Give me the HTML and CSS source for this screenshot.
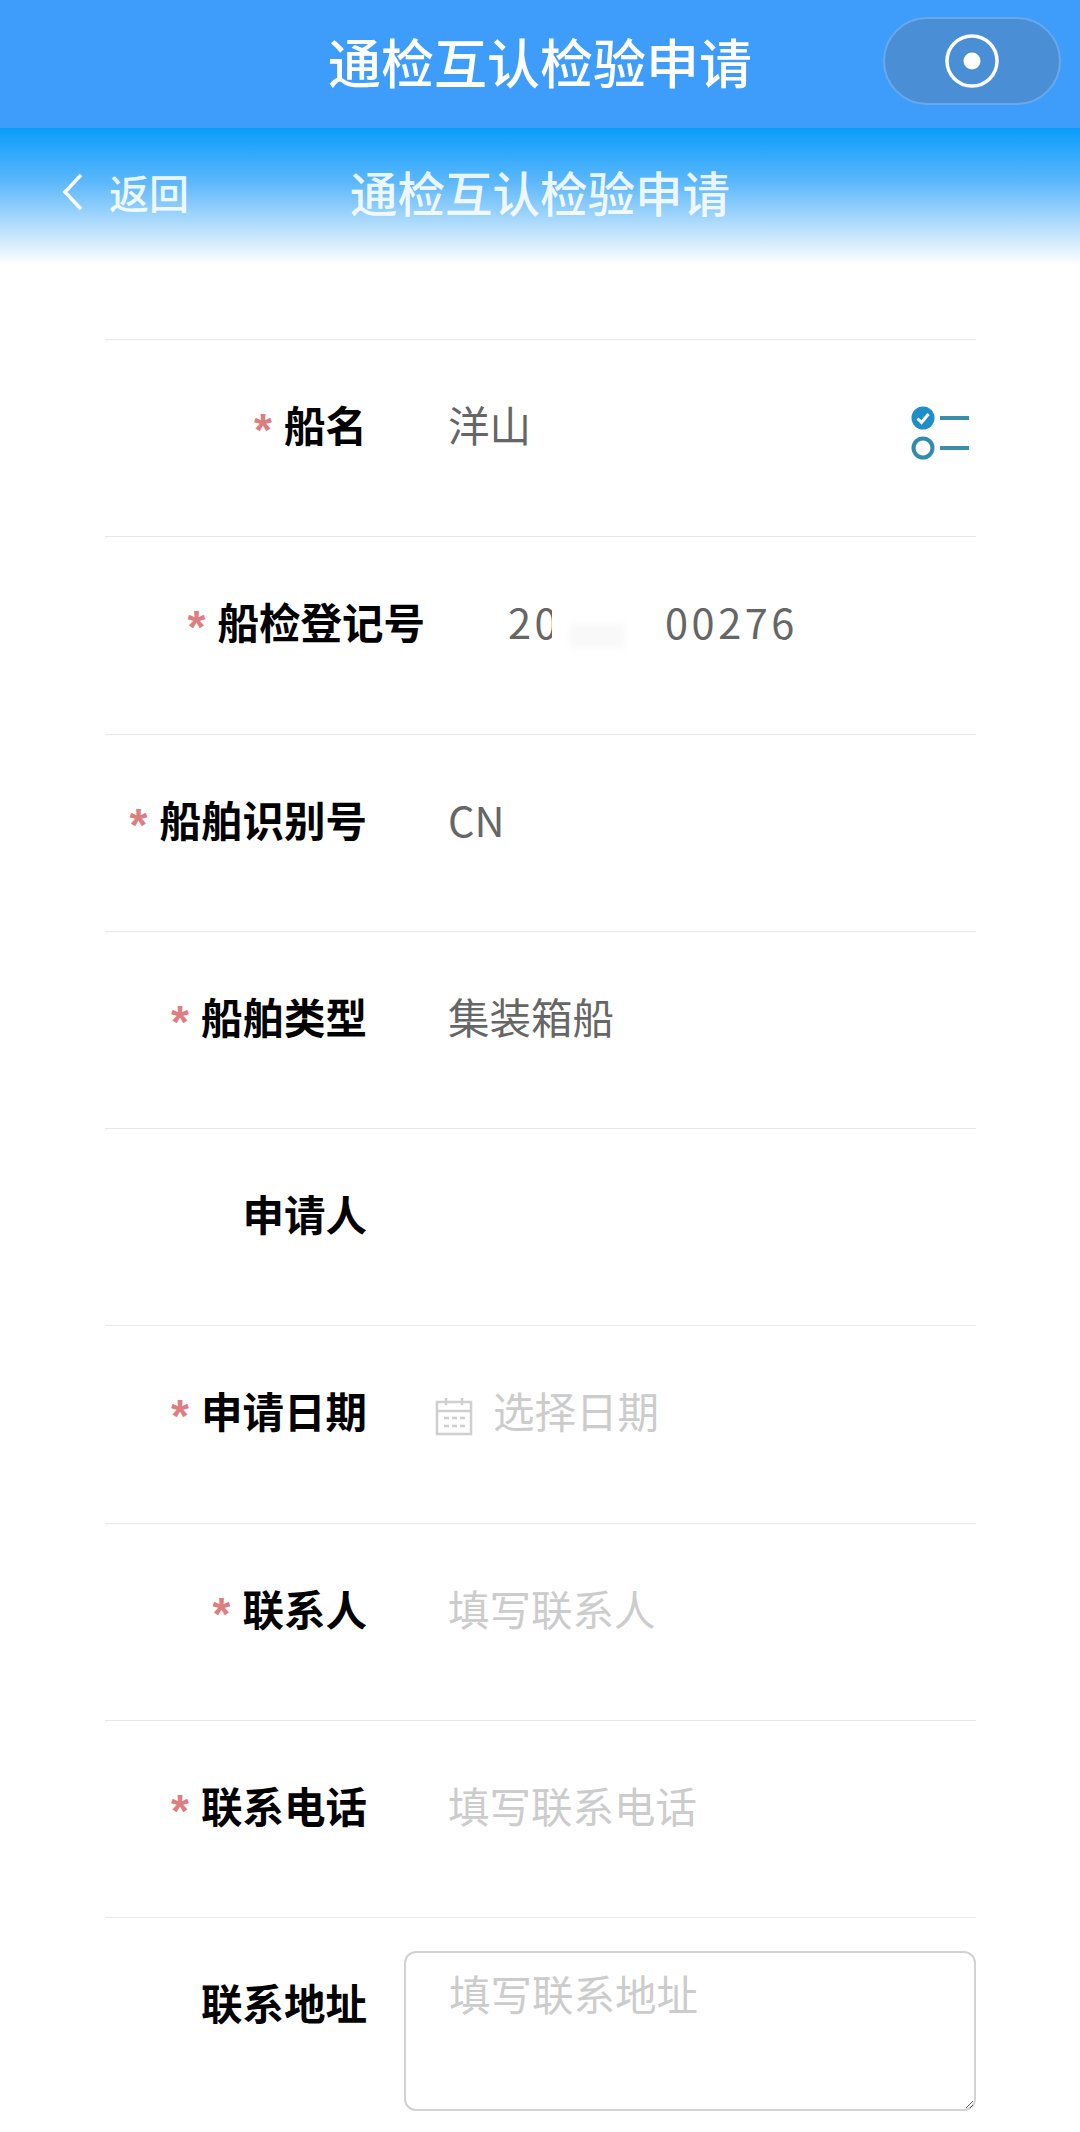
FILE: index.html
```html
<!DOCTYPE html>
<html lang="zh-CN">
<head>
    <meta charset="UTF-8">
    <meta name="viewport" content="width=device-width, initial-scale=1.0">
    <title>通检互认检验申请</title>
    <link rel="stylesheet" href="styles.css">
</head>
<body>
    <div class="topbar">
        <span></span>
        <div class="topbar-title">通检互认检验申请</div>
        <div class="capsule">
            <svg width="54" height="54" viewBox="0 0 54 54">
                <circle cx="27" cy="27" r="25" fill="none" stroke="#fff" stroke-width="3.5"/>
                <circle cx="27" cy="27" r="8.5" fill="#fff"/>
            </svg>
        </div>
    </div>

    <div class="subbar">
        <div class="back">
            <svg width="22" height="38" viewBox="0 0 22 38">
                <path d="M19 2 L3 19 L19 36" fill="none" stroke="#fff" stroke-width="3.5"/>
            </svg>
            <span>返回</span>
        </div>
        <div class="subbar-title">通检互认检验申请</div>
        <span></span>
    </div>

    <div class="form">
        <div class="row">
            <div class="label"><span class="star">*</span>船名</div>
            <div class="value">洋山</div>
            <svg class="pick" width="60" height="54" viewBox="0 0 60 54">
                <circle cx="12" cy="12" r="11.5" fill="#1d8ec8"/>
                <path d="M6.5 12.5 L10.5 16.5 L17.5 8" fill="none" stroke="#fff" stroke-width="3"/>
                <path d="M29 12 H58 M29 42 H58" stroke="#3b8ea8" stroke-width="4"/>
                <circle cx="12" cy="42" r="9.5" fill="none" stroke="#2f8caf" stroke-width="4"/>
            </svg>
        </div>
        <div class="row row-wide">
            <div class="label"><span class="star">*</span>船检登记号</div>
            <div class="value value-num">
                <span class="cut">20</span><span class="smudge"></span><span>00276</span>
            </div>
        </div>
        <div class="row">
            <div class="label"><span class="star">*</span>船舶识别号</div>
            <div class="value">CN</div>
        </div>
        <div class="row">
            <div class="label"><span class="star">*</span>船舶类型</div>
            <div class="value">集装箱船</div>
        </div>
        <div class="row">
            <div class="label">申请人</div>
            <div class="value"></div>
        </div>
        <div class="row">
            <div class="label"><span class="star">*</span>申请日期</div>
            <div class="value placeholder date">
                <svg width="38" height="40" viewBox="0 0 38 40">
                    <path d="M2 6 H36 V38 H2 Z M2 15 H36 M11 2 V9 M27 2 V9" fill="none" stroke="#cfcfcf" stroke-width="2.5"/>
                    <path d="M9 22 H14 M17 22 H22 M25 22 H30 M9 30 H14 M17 30 H22 M25 30 H30" stroke="#cfcfcf" stroke-width="2.5"/>
                </svg>
                <span>选择日期</span>
            </div>
        </div>
        <div class="row">
            <div class="label"><span class="star">*</span>联系人</div>
            <div class="value placeholder">填写联系人</div>
        </div>
        <div class="row">
            <div class="label"><span class="star">*</span>联系电话</div>
            <div class="value placeholder">填写联系电话</div>
        </div>
        <div class="row row-area">
            <div class="label">联系地址</div>
            <textarea class="area" placeholder="填写联系地址"></textarea>
        </div>
    </div>
</body>
</html>
```

FILE: styles.css
```css
body {
    margin: 0;
    height: 2132px;
    overflow: hidden;
    background-color: #fff;
    font-family: "Noto Sans CJK SC", "Noto Sans", sans-serif;
}
.topbar, .subbar {
    display: grid;
    grid-template-columns: 1fr auto 1fr;
    align-items: center;
    color: #fff;
}
.topbar {
    height: 128px;
    background-color: #3e9cfb;
}
.topbar-title {
    font-size: 53px;
    font-weight: 500;
    line-height: 70px;
    margin-bottom: 6px;
}
.capsule {
    justify-self: end;
    width: 178px;
    height: 88px;
    margin: 0 19px 7px 0;
    box-sizing: border-box;
    display: flex;
    justify-content: center;
    align-items: center;
    background-color: #4a8ed6;
    border: 2px solid #6aa8ea;
    border-radius: 44px;
}
.subbar {
    height: 137px;
    padding-bottom: 10px;
    box-sizing: border-box;
    background: linear-gradient(to bottom, #0a9cfc 0%, #5db8fb 40%, #b5defc 72%, #ffffff 100%);
}
.subbar-title {
    font-size: 47.5px;
    font-weight: 500;
    line-height: 60px;
    color: rgba(255, 255, 255, 0.9);
}
.back {
    display: flex;
    align-items: center;
    gap: 25px;
    padding-left: 62px;
    font-size: 40px;
    font-weight: 500;
    line-height: 50px;
    color: rgba(255, 255, 255, 0.9);
}
.form {
    margin: 74px 104px 0 105px;
}
.row {
    display: flex;
    align-items: flex-start;
    height: 197.25px;
    padding: 54px 5px 0 0;
    box-sizing: border-box;
    border-top: 1px solid #e8e8e8;
}
.label {
    width: 262px;
    flex-shrink: 0;
    text-align: right;
    font-size: 41.5px;
    font-weight: 700;
    line-height: 60px;
    color: #000;
}
.star {
    margin-right: 12px;
    font-family: "Liberation Sans", sans-serif;
    font-size: 46px;
    line-height: 40px;
    font-weight: 700;
    vertical-align: -4px;
    color: #dd7f80;
}
.row-wide .label {
    width: 320px;
}
.value {
    margin-left: 81px;
    font-size: 41.5px;
    line-height: 60px;
    color: #666;
}
.row-wide .value {
    margin-left: 83px;
}
.value-num {
    display: flex;
    letter-spacing: 3.5px;
}
/* the number is blurred out in the middle */
.cut {
    position: relative;
}
.cut::after {
    content: "";
    position: absolute;
    top: 0;
    right: 0;
    width: 9px;
    height: 100%;
    background-color: #fff;
}
.smudge {
    width: 56px;
    height: 24px;
    margin: 33px 40px 0 8px;
    background-color: #f9f9f9;
    filter: blur(3px);
}
.placeholder {
    color: #ccc;
}
.date {
    display: flex;
    align-items: center;
    gap: 20px;
    margin-left: 68px;
}
.date svg {
    margin-top: 12px;
}
.pick {
    margin-left: auto;
    margin-top: 12px;
}
.row-area {
    padding-top: 33px;
}
.row-area .label {
    margin-top: 21px;
}
.area {
    flex: 1;
    height: 160px;
    margin: 0 -5px 0 37px;
    padding: 10px 43px;
    box-sizing: border-box;
    font-family: inherit;
    font-size: 41.5px;
    line-height: 60px;
    border: 2px solid #d2d2d2;
    border-radius: 12px;
    background-color: #fff;
}
.area::placeholder {
    color: #ccc;
}
```
